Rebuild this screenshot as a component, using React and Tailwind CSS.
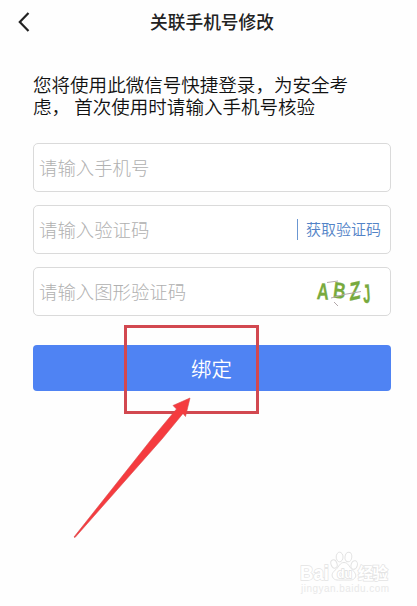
const Field = ({ placeholder, children }) => (
  <div className="flex h-[49px] items-center justify-between rounded-[5px] border border-[#dadada] bg-white pl-[5px]">
    <span className="whitespace-nowrap text-[18.4px] leading-none font-light text-[#b0b0b0]">
      {placeholder}
    </span>
    {children}
  </div>
);

const Captcha = () => (
  <svg
    width="62"
    height="32"
    viewBox="0 0 62 32"
    className="mr-[14px]"
    fill="#78aa3e"
    stroke="#78aa3e"
    strokeWidth=".3"
    fontFamily="Liberation Sans, sans-serif"
    fontWeight="700"
    fontSize="23"
  >
    <text transform="translate(2.5 23) rotate(4) scale(.72 1)">A</text>
    <text transform="translate(18.5 21.5) rotate(7) scale(.74 .98)">B</text>
    <text transform="translate(35.5 25) rotate(-14) skewX(-14) scale(.8 1.08)">Z</text>
    <text transform="translate(49.5 27) rotate(-4) scale(.58 1.15)">J</text>
    <path
      d="M13 6.5 24 5M17 22 30 18.5 47 15.5M20 26 24 30"
      fill="none"
      stroke="#b3a8aa"
      strokeWidth="1"
    />
  </svg>
);

const Watermark = () => (
  <div className="absolute top-[550px] left-[300px] h-[50px] w-[92px]">
    <svg
      width="92"
      height="46"
      viewBox="0 0 92 46"
      fill="#fff"
      stroke="#e3e3e3"
      strokeWidth="1"
      fontFamily="Liberation Sans, Noto Sans CJK SC, sans-serif"
      fontWeight="700"
    >
      <ellipse cx="34" cy="14" rx="3" ry="4.2" transform="rotate(-20 34 14)" />
      <ellipse cx="39.6" cy="7" rx="3.4" ry="4.8" />
      <ellipse cx="48.4" cy="7" rx="3.4" ry="4.8" transform="rotate(8 48.4 7)" />
      <ellipse cx="54.2" cy="15" rx="3.1" ry="4.4" transform="rotate(16 54.2 15)" />
      <path d="M44 12.5c-4 0-5 4-8 7-3.5 2.5-4.5 5-3.5 7.500 2 4 6 3 11.500 3s9.500 1 11.500-3c1-2.500-1-5-3.500-7.500-3-3-4-7-8-7Z" />
      <g className="[paint-order:stroke]" strokeWidth="1.4">
        <text x="0" y="29.5" fontSize="20" textLength="29" lengthAdjust="spacingAndGlyphs">Bai</text>
        <text x="37" y="28" fontSize="13" textLength="15" lengthAdjust="spacingAndGlyphs" stroke="#dedede">du</text>
        <text x="58" y="29" fontSize="15.5" textLength="30">经验</text>
      </g>
      <text x="1" y="41.5" fontSize="10" fontWeight="400" textLength="88" fill="#e9e9e9" stroke="none">
        jingyan.baidu.com
      </text>
    </svg>
  </div>
);

export default function App() {
  return (
    <div className="relative h-[606px] w-[417px] overflow-hidden bg-[#fefefe] font-['Noto_Sans_CJK_SC',sans-serif]">
      <header className="grid h-11 grid-cols-[33px_1fr_26px] items-center">
        <svg
          width="16"
          height="22"
          viewBox="0 0 16 22"
          className="ml-4"
          fill="none"
          stroke="#222"
          strokeWidth="2.2"
        >
          <path d="M12.5 2 3.8 11 12.5 20" />
        </svg>
        <h1 className="pb-px text-center text-[17.7px] leading-none font-medium text-[#222]">
          关联手机号修改
        </h1>
      </header>

      <main className="pr-[26px] pl-[33px]">
        <p className="pt-[29px] text-[18.55px] leading-[22px] font-[350] whitespace-nowrap text-[#111]">
          您将使用此微信号快捷登录，为安全考
          <br />
          虑， 首次使用时请输入手机号核验
        </p>

        <div className="mt-[26px] flex flex-col gap-[13px]">
          <Field placeholder="请输入手机号" />
          <Field placeholder="请输入验证码">
            <button className="mr-[9px] h-[21px] border-l border-[#6b97d2] pb-[2px] pl-2 text-[15px] leading-none font-[350] text-[#5383c7]">
              获取验证码
            </button>
          </Field>
          <Field placeholder="请输入图形验证码">
            <Captcha />
          </Field>
        </div>

        <button className="mt-[29px] h-[46px] w-full rounded-[4px] bg-[#4f83f3] pr-px text-[20.4px] leading-none font-[350] text-white">
          绑定
        </button>
      </main>

      {/* Highlight around the submit button */}
      <div className="absolute top-[325px] left-[124px] h-[89px] w-[135px] border-3 border-[#d24850]" />
      <svg
        width="120"
        height="145"
        viewBox="0 0 120 145"
        className="absolute top-[396px] left-[72px]"
      >
        <path
          d="M118 2 113.5 20.5 111 17.5 90 43 3 141.5 2 141 82 40 104.5 13 101 9.5Z"
          fill="#f53b3f"
          stroke="#d84a4c"
          strokeWidth=".6"
        />
      </svg>
      <Watermark />
    </div>
  );
}
